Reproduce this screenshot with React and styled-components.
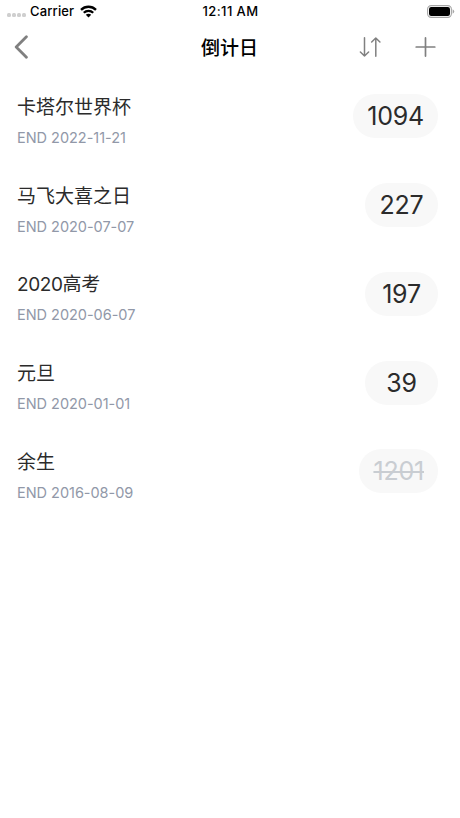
import React from 'react'
import styled, { createGlobalStyle } from 'styled-components';

const GlobalStyle = createGlobalStyle`
  *{
    box-sizing: border-box;
  }

  body{
    margin: 0;
    background-color: #fff;
    font-family: Inter, "Noto Sans CJK SC", sans-serif;
    color: #2b2b2b;
  }

  svg{
    display: block;
  }
`

const Screen = styled.div`
  height: 818px;
  overflow: hidden;
  background-color: #fff;
`

const StatusBar = styled.div`
  height: 23px;
  padding: 0 6px 0 7px;
  display: grid;
  grid-template-columns: 1fr auto 1fr;
  align-items: center;
  font-size: 13px;
  font-weight: 500;
  line-height: 23px;
  color: #000;
`

const Carrier = styled.div`
  display: flex;
  align-items: center;

  .name{
    width: 45px;
    margin: 0 5px 0 4px;
    letter-spacing: 0.15px;
  }
`

const Signal = styled.div`
  display: flex;
  gap: 1px;
  padding-top: 7px;

  i{
    width: 4px;
    height: 4px;
    border-radius: 1.5px;
    background-color: #cfcfcf;
  }
`

const Clock = styled.div`
  letter-spacing: 0.4px;
`

const Battery = styled.div`
  justify-self: end;
  margin-right: -1px;
`

const NavBar = styled.div`
  height: 49px;
  padding: 0 24px 0 14px;
  display: grid;
  grid-template-columns: 1fr auto 1fr;
  align-items: center;

  > svg{
    margin-top: -1px;
  }
`

const Title = styled.h1`
  margin: 2px 0 0 9px;
  font-size: 19px;
  font-weight: 500;
  line-height: 28px;
  color: #000;
`

const Actions = styled.div`
  display: flex;
  align-items: center;
  justify-content: flex-end;
  gap: 34px;
  margin-top: -1px;
`

const List = styled.div`
  padding: 0 22px 0 17px;
`

const Row = styled.div`
  height: 88.75px;
  display: flex;
  align-items: center;
  justify-content: space-between;
`

const Info = styled.div`
  padding-top: 11px;
`

const Name = styled.div`
  font-size: 19px;
  line-height: 28px;
  letter-spacing: ${props => props.$tight ? '-0.4px' : '0'};
`

const EndDate = styled.div`
  margin-top: 4px;
  font-size: 14.5px;
  line-height: 24px;
  letter-spacing: -0.03px;
  color: #9198a8;
`

const Days = styled.div`
  min-width: 73px;
  height: 44px;
  padding: 0 14px;
  border-radius: 22px;
  background-color: #f8f8f8;
  font-size: 25px;
  line-height: 45px;
  letter-spacing: -0.2px;
  text-align: center;
  color: ${props => props.$passed ? '#c9cdd2' : '#2b2b2b'};
  text-decoration: ${props => props.$passed ? 'line-through' : 'none'};
  text-decoration-thickness: 2px;
`

const events = [
  { name: '卡塔尔世界杯', end: '2022-11-21', days: 1094 },
  { name: '马飞大喜之日', end: '2020-07-07', days: 227 },
  { name: '2020高考', end: '2020-06-07', days: 197 },
  { name: '元旦', end: '2020-01-01', days: 39 },
  { name: '余生', end: '2016-08-09', days: 1201, passed: true },
]

const WifiIcon = () => (
  <svg width="17" height="13" viewBox="0 0 17 13" fill="none" stroke="#000" strokeWidth="2.3">
    <path d="M1 4.9C5.2 .7 11.8 .7 16 4.9" />
    <path d="M3.8 7.8C6.4 5.2 10.6 5.2 13.2 7.8" />
    <path d="M8.5 12.5L5.8 9.8C7.3 8.4 9.7 8.4 11.2 9.8Z" fill="#000" stroke="none" />
  </svg>
)

const BatteryIcon = () => (
  <svg width="28" height="13" viewBox="0 0 28 13">
    <rect x=".6" y=".6" width="23.8" height="11.8" rx="3.6" fill="none" stroke="#a6a6a6" strokeWidth="1.1" />
    <rect x="2" y="2" width="21" height="9" rx="2.2" fill="#000" />
    <path d="M25.6 4.3Q27.2 5 27.2 6.5T25.6 8.7Z" fill="#a6a6a6" />
  </svg>
)

const BackIcon = () => (
  <svg width="15" height="24" viewBox="0 0 15 24" fill="none" stroke="#808080" strokeWidth="2.8" strokeLinecap="round" strokeLinejoin="round">
    <path d="M12.4 1.7L2.2 12L12.4 22.3" />
  </svg>
)

const SortIcon = () => (
  <svg width="22" height="20" viewBox="0 0 22 20" fill="none" stroke="#808080" strokeWidth="1.5" strokeLinecap="round" strokeLinejoin="round">
    <path d="M5.5 .8V19M1.4 15L5.5 19L9.6 15" />
    <path d="M16.8 19.2V1M12.7 5L16.8 1L20.9 5" />
  </svg>
)

const PlusIcon = () => (
  <svg width="21" height="20" viewBox="0 0 21 20" fill="none" stroke="#808080" strokeWidth="1.7" strokeLinecap="round">
    <path d="M10.5 .9V19.1M1.2 10H19.8" />
  </svg>
)

const EventRow = ({ event }) => (
  <Row>
    <Info>
      <Name $tight={/\d/.test(event.name)}>{event.name}</Name>
      <EndDate>END {event.end}</EndDate>
    </Info>
    <Days $passed={event.passed}>{event.days}</Days>
  </Row>
)

const App = () => {
  return (
    <Screen>
      <GlobalStyle />
      <StatusBar>
        <Carrier>
          <Signal><i /><i /><i /><i /></Signal>
          <span className="name">Carrier</span>
          <WifiIcon />
        </Carrier>
        <Clock>12:11 AM</Clock>
        <Battery><BatteryIcon /></Battery>
      </StatusBar>

      <NavBar>
        <BackIcon />
        <Title>倒计日</Title>
        <Actions>
          <SortIcon />
          <PlusIcon />
        </Actions>
      </NavBar>

      <List>
        {events.map(event => <EventRow key={event.name} event={event} />)}
      </List>
    </Screen>
  )
}

export default App;
